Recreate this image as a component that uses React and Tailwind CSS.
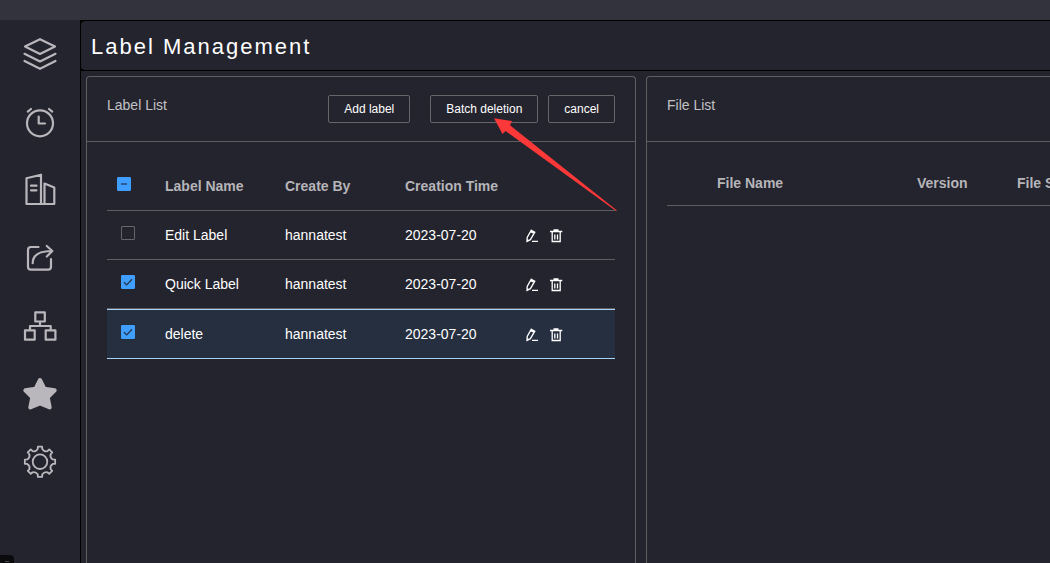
import { useEffect, useRef, useState } from "react";

const initialLabels = [
  { id: 1, name: "Edit Label", createBy: "hannatest", time: "2023-07-20" },
  { id: 2, name: "Quick Label", createBy: "hannatest", time: "2023-07-20" },
  { id: 3, name: "delete", createBy: "hannatest", time: "2023-07-20" },
];

// outline of the gear: eight teeth round the centre
const gearPath = () => {
  const at = (r, deg) => {
    const a = (deg * Math.PI) / 180;
    return `${(18 + r * Math.sin(a)).toFixed(2)} ${(17.7 - r * Math.cos(a)).toFixed(2)}`;
  };
  let d = `M${at(15.3, -8)}`;
  for (let i = 0; i < 8; i++) {
    const c = i * 45;
    d += `L${at(15.3, c + 8)}L${at(12.9, c + 10)}Q${at(10.6, c + 22.5)} ${at(12.9, c + 35)}L${at(15.3, c + 37)}`;
  }
  return d + "Z";
};

const menu = [
  {
    label: "Layers",
    icon: (
      <>
        <path d="M18 3.200 33 10.600 18 18 3 10.600Z" />
        <path d="M2.500 17.800 18 25.500l15.500-7.700M2.500 25 18 32.800 33.500 25" />
      </>
    ),
  },
  {
    label: "Schedule",
    icon: (
      <>
        <circle cx="18" cy="19.3" r="13" />
        <path d="M16.700 12.500v7h6.300M5.800 7.600 9 5M27 5l3.200 2.600" />
      </>
    ),
  },
  {
    label: "Company",
    icon: (
      <path d="M4.500 6.300 19 2.700V32H4.500ZM22.500 32V11.500l9.800 4V32ZM19 32h3M9 13.700h5.500M9 18.300h5.500" />
    ),
  },
  {
    label: "Share",
    icon: (
      <path d="M16.500 7H9a3 3 0 0 0-3 3v16.700a3 3 0 0 0 3 3h17a3 3 0 0 0 3-3v-7.700M10.700 23.200C10.700 15 17 11 30 11M24.800 6l5.500 5-5.500 5.500" />
    ),
  },
  {
    label: "Structure",
    icon: (
      <path d="M13.300 4.300h9.500v9.200h-9.500ZM3 22.300h9.700v9.400H3ZM23.700 22.300h9.700v9.400h-9.700ZM18 13.500V18M8 22.300V18h20.700v4.300" />
    ),
  },
  {
    label: "Favorites",
    icon: (
      <path
        fill="currentColor"
        strokeWidth="4"
        d="m18 4 4.400 8.600 10.300 1.700-7 7 2 10.200L18 27.500l-9.700 4 2-10.200-7-7 10.300-1.700Z"
      />
    ),
  },
  {
    label: "Settings",
    icon: (
      <>
        <path strokeWidth="1.800" d={gearPath()} />
        <circle cx="18" cy="17.7" r="7.3" strokeWidth="1.800" />
      </>
    ),
  },
];

function Sidebar() {
  return (
    <nav className="flex w-20 shrink-0 flex-col items-center gap-8 pt-4">
      {menu.map((item) => (
        <a key={item.label} href="#" aria-label={item.label} className="text-[#b9b7bc]">
          <svg
            viewBox="0 0 36 36"
            className="h-9 w-9"
            fill="none"
            stroke="currentColor"
            strokeWidth="2.200"
            strokeLinecap="round"
            strokeLinejoin="round"
          >
            {item.icon}
          </svg>
        </a>
      ))}
    </nav>
  );
}

function Checkbox({ checked, indeterminate = false, onChange, label }) {
  const ref = useRef(null);

  useEffect(() => {
    ref.current.indeterminate = indeterminate;
  }, [indeterminate]);

  return (
    <span className="grid h-3.5 w-3.5">
      <input
        ref={ref}
        type="checkbox"
        aria-label={label}
        checked={checked}
        onChange={onChange}
        className="col-start-1 row-start-1 h-3.5 w-3.5 appearance-none rounded-[1px] border border-[#66666a] checked:border-[#409eff] checked:bg-[#409eff] indeterminate:border-[#409eff] indeterminate:bg-[#409eff]"
      />
      <svg
        viewBox="0 0 14 14"
        fill="none"
        className="pointer-events-none col-start-1 row-start-1 h-3.5 w-3.5"
      >
        {indeterminate && <path d="M4 7h6" stroke="#2c5f96" strokeWidth="2" />}
        {checked && !indeterminate && (
          <path d="m3 7.200 2.700 2.700L11 4.200" stroke="#24344c" strokeWidth="1.300" />
        )}
      </svg>
    </span>
  );
}

function HeaderButton({ children, onClick }) {
  return (
    <button
      className="h-7 rounded-xs border border-[#66666a] px-[15px] text-xs text-white"
      onClick={onClick}
    >
      {children}
    </button>
  );
}

function EditIcon() {
  return (
    <svg viewBox="0 0 14 14" className="h-3.5 w-3.5" fill="none" stroke="currentColor" strokeWidth="1.300">
      <path d="M6.300 1.200 9.800 3.200 5.400 10.700 2 12.400 2.200 8.500ZM5.700 2.400l3.400 2M2.200 10.800l1.500 1M7 12.400h6" />
    </svg>
  );
}

function TrashIcon() {
  return (
    <svg viewBox="0 0 14 14" className="h-3.5 w-3.5" fill="none" stroke="currentColor" strokeWidth="1.300">
      <path d="M1 2.500h12.300M4.500 1h5M3.200 2.500v10h8v-10M5.800 5.500v5M8.500 5.500v5" />
    </svg>
  );
}

function LabelList() {
  const [labels, setLabels] = useState(initialLabels);
  const [selected, setSelected] = useState([2, 3]);
  const [current, setCurrent] = useState(3);

  const toggle = (id) => {
    setSelected(selected.includes(id) ? selected.filter((s) => s !== id) : [...selected, id]);
  };

  const remove = (ids) => {
    setLabels(labels.filter((l) => !ids.includes(l.id)));
    setSelected(selected.filter((s) => !ids.includes(s)));
  };

  const all = labels.length > 0 && selected.length === labels.length;

  return (
    <section className="w-[550px] shrink-0 rounded-t border border-b-0 border-[#5f5f62]">
      <div className="flex h-[65px] items-start border-b border-[#5f5f62] px-5 pt-[18px]">
        <h2 className="grow text-sm leading-5 text-[#c2c2c5]">Label List</h2>
        <div className="mr-5">
          <HeaderButton>Add label</HeaderButton>
        </div>
        <div className="relative mr-2.5">
          <HeaderButton onClick={() => remove(selected)}>Batch deletion</HeaderButton>
          <svg
            viewBox="0 0 123 93"
            className="pointer-events-none absolute top-[23px] left-16 h-[93px] w-[123px]"
          >
            <path d="M0 .3 18 3l-2 4.300L123 92.500 122 93 11.500 13l-3 3Z" fill="#fd3838" />
          </svg>
        </div>
        <HeaderButton onClick={() => setSelected([])}>cancel</HeaderButton>
      </div>

      <div className="p-5">
        <table className="w-full table-fixed border-separate border-spacing-0 text-left text-sm">
          <colgroup>
            <col className="w-12" />
            <col className="w-30" />
            <col className="w-30" />
            <col className="w-30" />
            <col />
          </colgroup>
          <thead>
            <tr className="h-[49px] text-[#b6b5b9] *:border-b *:border-[#5f5f62]">
              <th className="pb-1 pl-2.5">
                <Checkbox
                  label="Select all"
                  checked={all}
                  indeterminate={selected.length > 0 && !all}
                  onChange={() => setSelected(all ? [] : labels.map((l) => l.id))}
                />
              </th>
              <th className="px-2.5">Label Name</th>
              <th className="px-2.5">Create By</th>
              <th className="px-2.5">Creation Time</th>
              <th></th>
            </tr>
          </thead>
          <tbody>
            {labels.map((l) => (
              <tr
                key={l.id}
                onClick={() => setCurrent(l.id)}
                className={`text-white ${
                  current === l.id
                    ? "h-[50px] bg-[#262f40] *:border-y *:border-[#a9d3fb]"
                    : "h-[49px] *:border-b *:border-[#5f5f62]"
                }`}
              >
                <td className="pb-1 pl-3.5">
                  <Checkbox
                    label={`Select ${l.name}`}
                    checked={selected.includes(l.id)}
                    onChange={() => toggle(l.id)}
                  />
                </td>
                <td className="px-2.5">{l.name}</td>
                <td className="px-2.5">{l.createBy}</td>
                <td className="px-2.5">{l.time}</td>
                <td className="px-2.5 pt-0.5">
                  <div className="flex gap-2.5">
                    <button aria-label={`Edit ${l.name}`}>
                      <EditIcon />
                    </button>
                    <button aria-label={`Delete ${l.name}`} onClick={() => remove([l.id])}>
                      <TrashIcon />
                    </button>
                  </div>
                </td>
              </tr>
            ))}
          </tbody>
        </table>
      </div>
    </section>
  );
}

function FileList() {
  return (
    <section className="min-w-[560px] grow rounded-t border border-b-0 border-[#5f5f62]">
      <div className="h-[65px] border-b border-[#5f5f62] px-5 pt-[18px]">
        <h2 className="text-sm leading-5 text-[#c2c2c5]">File List</h2>
      </div>
      <div className="p-5">
        <table className="w-full table-fixed border-separate border-spacing-0 text-left text-sm">
          <colgroup>
            <col className="w-10" />
            <col className="w-50" />
            <col className="w-25" />
            <col />
          </colgroup>
          <thead>
            <tr className="h-11 text-[#b6b5b9] *:border-b *:border-[#5f5f62] *:pb-0.5">
              <th></th>
              <th className="px-2.5">File Name</th>
              <th className="px-2.5">Version</th>
              <th className="px-2.5">File Size</th>
            </tr>
          </thead>
        </table>
      </div>
    </section>
  );
}

export default function App() {
  return (
    <div className="flex h-screen flex-col overflow-hidden bg-[#24242e] font-['Liberation_Sans',Arial,sans-serif]">
      <header className="h-5 shrink-0 bg-[#33333d]"></header>
      <div className="flex min-h-0 grow">
        <Sidebar />
        <main className="flex min-w-0 grow flex-col overflow-hidden border-l border-black">
          <div className="bg-black">
            <div className="rounded-l border-y border-black bg-[#24242e] bg-clip-padding pl-2.5">
              <h1 className="pt-[9px] pb-[7px] text-[22px] leading-[33px] tracking-[2px] text-white">
                Label Management
              </h1>
            </div>
          </div>
          <div className="flex grow gap-2.5 pt-[5px] pl-[5px]">
            <LabelList />
            <FileList />
          </div>
        </main>
      </div>
      <div className="fixed bottom-0 left-0 flex h-2 w-3.5 items-end justify-center rounded-tr bg-[#0b0b0e] pb-px">
        <span className="h-px w-1 bg-[#4a4a4e]"></span>
      </div>
    </div>
  );
}
